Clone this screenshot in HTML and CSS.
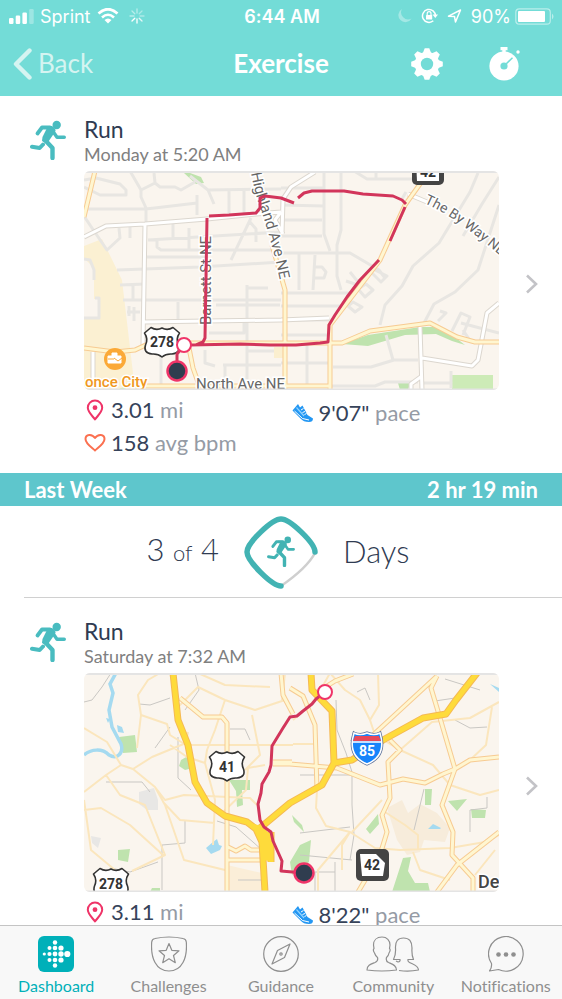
FILE: index.html
```html
<!DOCTYPE html>
<html lang="en">
<head>
    <meta charset="UTF-8">
    <meta name="viewport" content="width=device-width, initial-scale=1.0">
    <title>Exercise</title>
    <link rel="stylesheet" href="styles.css">
</head>
<body>
    <!-- shared shapes -->
    <svg class="defs" width="0" height="0" aria-hidden="true">
        <symbol id="runner" viewBox="0 0 36 40">
            <circle cx="26.7" cy="5" r="4.2" fill="currentColor"/>
            <g fill="none" stroke="currentColor" stroke-linecap="round" stroke-linejoin="round">
                <path d="M7.5 13.5L12 7.5H20" stroke-width="3.8"/>
                <path d="M22 10L27 17.2H34.3" stroke-width="3.4"/>
                <path d="M2 26.7L9.7 28L13 24.5" stroke-width="4"/>
                <path d="M15 20L22.5 28V38" stroke-width="4.4"/>
            </g>
            <path d="M14 6H22Q27 9 25 12L19.5 20L17 24L12 21L12.500 17L16.500 9Z" fill="currentColor"/>
        </symbol>
        <symbol id="us-shield" viewBox="-20 -17 40 34">
            <path d="M-11-14.5Q-5.500-11 0-14Q5.500-11 11-14.500L17.500-9Q13.500-3 16.500 3Q19 11 10 12Q4 11.500 0 15Q-4 11.500-10 12Q-19 11-16.500 3Q-13.500-3-17.500-9Z" fill="#fff" stroke="#333" stroke-width="1.6" stroke-linejoin="round"/>
        </symbol>
        <symbol id="pin" viewBox="0 0 18 22">
            <path d="M9 20.500C6 16.500 1.800 12.500 1.800 8.700A7.200 7.200 0 0 1 16.200 8.700C16.200 12.500 12 16.500 9 20.500Z" fill="none" stroke="#ef3468" stroke-width="2" stroke-linejoin="round"/>
            <circle cx="9" cy="8.700" r="2.400" fill="#ef3468"/>
        </symbol>
        <symbol id="heart" viewBox="0 0 22 20">
            <path d="M11 17.500C7 14 1.500 10.500 1.500 6C1.500 1 8 .5 11 5C14 .5 20.500 1 20.500 6C20.500 10.500 15 14 11 17.500Z" fill="none" stroke="#fb7050" stroke-width="2" stroke-linejoin="round"/>
        </symbol>
        <symbol id="shoe" viewBox="0 0 22 20">
            <path d="M.5 7.500L6 1L8 4.500L10.500 2.500L15.500 12L21 15.500Q21 19 17 19Q11.500 19 8.500 15.500Z" fill="#2397f3"/>
            <path d="M2.500 8L10.500 15.500L17 17" fill="none" stroke="#fff" stroke-width="1"/>
            <path d="M4.500 4.500L12 13" fill="none" stroke="#8fd3ff" stroke-width="1.200"/>
            <path d="M9 7L11.500 5.500M10.500 9.500L13 8.500M12.500 11.500L14.500 10.500" stroke="#fff" stroke-width="1"/>
        </symbol>
        <symbol id="chevron" viewBox="0 0 14 20">
            <path d="M2 1.500L11 10L2 18.500" fill="none" stroke="#c3c3c7" stroke-width="2.600"/>
        </symbol>
        <symbol id="gear-tooth" viewBox="-17 -17 34 34">
            <path d="M-4.500-10L-2.300-15.800H2.300L4.500-10V10L2.300 15.800H-2.300L-4.500 10Z"/>
        </symbol>
    </svg>

    <header class="header">
        <div class="status">
            <div class="status-side">
                <svg width="25" height="15" viewBox="0 0 25 15" fill="#fff">
                    <rect x="0" y="9" width="4.500" height="6" rx="1.200"/>
                    <rect x="6.700" y="6.500" width="4.500" height="8.500" rx="1.200"/>
                    <rect x="13.400" y="3.500" width="4.500" height="11.500" rx="1.200"/>
                    <rect x="20.200" y="0" width="4.500" height="15" rx="1.200" opacity=".3"/>
                </svg>
                <span class="carrier">Sprint</span>
                <svg width="22" height="16" viewBox="0 0 22 16" fill="none" stroke="#fff">
                    <path d="M1.500 5.500Q11-3 20.500 5.500" stroke-width="2.800"/>
                    <path d="M5 9.500Q11 4 17 9.500" stroke-width="2.600"/>
                    <path d="M7.500 12L11 15.500L14.500 12Q11 9 7.500 12Z" fill="#fff" stroke="none"/>
                </svg>
                <svg class="spinner" width="16" height="16" viewBox="0 0 16 16" stroke="#fff" stroke-width="1.300" stroke-linecap="round">
                    <path d="M8 1V5" opacity=".5"/><path d="M13 3L10.200 5.800" opacity=".4"/>
                    <path d="M15 8H11" opacity=".4"/><path d="M13 13L10.200 10.200" opacity=".8"/>
                    <path d="M8 15V11"/><path d="M3 13L5.800 10.200"/>
                    <path d="M1 8H5" opacity=".5"/><path d="M3 3L5.800 5.800" opacity=".5"/>
                </svg>
            </div>
            <span class="clock">6:44 AM</span>
            <div class="status-side status-right">
                <svg width="14" height="14" viewBox="0 0 14 14"><path d="M4 0A7 7 0 1 0 13.500 9.500A7 7 0 0 1 4 0Z" fill="#fff" opacity=".35"/></svg>
                <svg width="17" height="16" viewBox="0 0 17 16">
                    <path d="M14.500 8A6.500 6.500 0 1 0 12.300 12.800" fill="none" stroke="#fff" stroke-width="1.500"/>
                    <path d="M11.500 6.500H17L14.300 10Z" fill="#fff"/>
                    <rect x="5" y="7" width="6.200" height="4.500" rx=".6" fill="#fff"/>
                    <path d="M6.200 7V5.500A1.900 1.900 0 0 1 10 5.500V7" fill="none" stroke="#fff" stroke-width="1.200"/>
                </svg>
                <svg width="15" height="14" viewBox="0 0 15 14"><path d="M1.500 7.200L13.500 1L8.500 13L7.500 7.500Z" fill="none" stroke="#fff" stroke-width="1.500" stroke-linejoin="round"/></svg>
                <span>90%</span>
                <svg width="40" height="17" viewBox="0 0 40 17">
                    <rect x=".8" y=".8" width="34.500" height="15.400" rx="3.500" fill="none" stroke="#fff" stroke-width="1.200" opacity=".5"/>
                    <rect x="3" y="3" width="27" height="11" rx="1" fill="#fff"/>
                    <path d="M37 5.500Q40 8.500 37 11.500Z" fill="#fff" opacity=".5"/>
                </svg>
            </div>
        </div>
        <div class="navbar">
            <button class="back" type="button">
                <svg width="20" height="34" viewBox="0 0 20 34"><path d="M17.500 3.500L4 17L17.500 30.500" fill="none" stroke="#d5f4f1" stroke-width="4.400" stroke-linecap="round" stroke-linejoin="round"/></svg>
                <span>Back</span>
            </button>
            <h1>Exercise</h1>
            <div class="actions">
                <button type="button" aria-label="Settings">
                    <svg width="34" height="34" viewBox="-17 -17 34 34">
                        <g fill="#fff">
                            <use href="#gear-tooth" x="-17" y="-17" width="34" height="34"/>
                            <use href="#gear-tooth" x="-17" y="-17" width="34" height="34" transform="rotate(45)"/>
                            <use href="#gear-tooth" x="-17" y="-17" width="34" height="34" transform="rotate(90)"/>
                            <use href="#gear-tooth" x="-17" y="-17" width="34" height="34" transform="rotate(135)"/>
                            <circle r="12.300"/>
                        </g>
                        <circle r="6.200" fill="#73dcd7"/>
                    </svg>
                </button>
                <button type="button" aria-label="Stopwatch">
                    <svg width="34" height="36" viewBox="0 0 34 36">
                        <circle cx="16" cy="20" r="14.600" fill="#fff"/>
                        <path d="M12.500 1H19.500V4.200H17.700V8H14.300V4.200H12.500Z" fill="#fff"/>
                        <circle cx="30" cy="6" r="1.700" fill="#fff"/>
                        <circle cx="16" cy="20" r="3.600" fill="#73dcd7"/>
                        <path d="M16 20L24.500 11.700" stroke="#73dcd7" stroke-width="1.500"/>
                    </svg>
                </button>
            </div>
        </div>
    </header>

    <main class="feed">
        <a class="workout" href="#monday">
            <svg class="workout-icon" width="36" height="40"><use href="#runner"/></svg>
            <div class="workout-body">
                <h2>Run</h2>
                <p class="when">Monday at 5:20 AM</p>
                <svg class="map" viewBox="84 171 415 219">
                    <rect x="84" y="171" width="415" height="219" fill="#faf5ee"/>
                    <path d="M84 246L102 239L122 280L135 390H84V318H100V299H94V268L84 258Z" fill="#fbf0d2"/>
                    <path d="M184 173H190L201 177L204 183L196 184ZM342 344L368 335L420 327H435L456 338L465 345L452 341L436 334L405 335L368 346ZM398 383H410L408 390H400Z" fill="#bfe3ae"/>
                    <path d="M452 375H493V390H452ZM118 390Q123 385 128 390Z" fill="#cdebb7"/>
                    <path d="M274 347H284V358H274Z" fill="#fbefcf"/>
                    <g class="street">
                        <path d="M84 180L96 178L120 184L126 190V195H100L84 187M130 171L141 190V197L146 208V224M141 190L155 183L154 173M155 183L160 187H175L181 190L195 182M190 176L208 190L214 204M87 209H146L197 203M197 195V215M208 190L281 189M229 190V214M244 189V213M84 216L92 228L107 250L120 238L119 228M130 226V238M148 240L281 232M157 240V247L161 250H281M173 223V238M189 228V250M251 218L231 260M250 222L256 229V242"/>
                        <path d="M117 270L200 267L281 262M147 257H205M120 285L145 284M123 300H281M133 300V286M178 302V323M247 285V388M216 305H280M209 333H244V322M248 288H268M84 259L90 260L94 270V280M95 298H99V318H84M127 312H140M129 306V316M134 307V321M161 345V388M205 350V363L215 366M223 365H281M225 366V388M248 351H274"/>
                        <path d="M281 188H324V173M341 173V230L337 245V276L341 290M324 173V234L330 251M281 220H322M322 236H281M281 205L324 206M281 253H350L379 270L385 278M299 254V290M315 255L313 290M313 267H322L326 272L324 278H315M281 293H350M281 306H340M281 320H333M281 335H327M354 171L367 179H376M376 173V179M367 179H415M406 192L402 199M478 173L470 192L439 243L413 266L402 286L385 305L380 325M499 177L482 204L463 236M499 205L478 270L455 292L434 304L423 325M375 270L387 276L381 282L371 272M350 272L358 282M346 281L358 285M366 284L373 290L365 297L358 289ZM353 302L362 307L355 312L348 306Z"/>
                        <path d="M333 367H371L394 360H418M332 386H375L385 382H418M423 383H452M451 371V388M386 335L393 360M452 331L461 313L470 317L463 335M461 323L499 333M438 321L446 313L440 311M471 342L463 330M281 363H330M307 344V385"/>
                    </g>
                    <g class="lane-edge">
                        <path d="M84 237L106 226L145 224L207 219L256 214L281 212M145 224L143 345M143 322L281 320L329 318M93 352V385M315 172L291 187L283 199L282 234M281 212L275 220L283 234M408 194L427 202M420 327L422 390M422 358L472 366L478 360L487 313L499 303M422 376L411 384V390"/>
                    </g>
                    <g class="lane">
                        <path d="M84 237L106 226L145 224L207 219L256 214L281 212M145 224L143 345M143 322L281 320L329 318M93 352V385M315 172L291 187L283 199L282 234M281 212L275 220L283 234M408 194L427 202M420 327L422 390M422 358L472 366L478 360L487 313L499 303M422 376L411 384V390"/>
                    </g>
                    <g class="avenue-edge">
                        <path d="M95 171L84 217M84 348L115 352L135 350L150 343H342L370 331L430 323L457 337L475 342H499M425 177L405 205L380 260L330 325V390M135 386H330M189 348L193 368L199 385M272 245L285 290V390"/>
                    </g>
                    <g class="avenue">
                        <path d="M95 171L84 217M84 348L115 352L135 350L150 343H342L370 331L430 323L457 337L475 342H499M425 177L405 205L380 260L330 325V390M135 386H330M189 348L193 368L199 385M272 245L285 290V390"/>
                    </g>
                    <path id="highland" d="M251 173C254 188 256 196 260 207S273 245 282 290" fill="none"/>
                    <path id="byway" d="M424 203C450 214 475 234 530 280" fill="none"/>
                    <g class="place">
                        <text><textPath href="#highland">Highland Ave NE</textPath></text>
                        <text class="place-small"><textPath href="#byway">The By Way NE</textPath></text>
                        <text transform="translate(211 325) rotate(-90)">Barnett St NE</text>
                        <text x="196" y="389">North Ave NE</text>
                    </g>
                    <circle cx="115" cy="359" r="11" fill="#fba937"/>
                    <path d="M108 356H121V363H108ZM112 356V353H117V356" fill="#fff" stroke="#fff" stroke-width="1"/>
                    <path d="M108 359H114M114 358L118 361L122 358" fill="none" stroke="#fba937" stroke-width="1"/>
                    <text class="city" x="85" y="387">once City</text>
                    <rect x="412" y="155" width="32" height="30" rx="5" fill="#444"/>
                    <path d="M416 160H439V181H417Z" fill="#fff"/>
                    <text class="shield-text" x="428" y="177">42</text>
                    <use href="#us-shield" x="142" y="325" width="40" height="34"/>
                    <text class="shield-text" x="162" y="347">278</text>
                    <path class="route" d="M177 371V354L184 345M184 345H196L203 342L205 338L207 218M209 216L229 215L256 213L260 208V198L265 196L281 198L294 203M298 198L304 193L312 191H344L363 194L393 196L402 200L406 204M405 207L390 241M379 260L360 280L347 297L335 315L329 325L328 342L320 343L296 345L270 345L240 344L190 345"/>
                    <circle cx="184" cy="345" r="7" fill="#fff" stroke="#ef3468" stroke-width="2"/>
                    <circle cx="177" cy="371" r="9.500" fill="#303d4f" stroke="#ef3468" stroke-width="2.500"/>
                    <path d="M84 172H499M84 389.500H499" stroke="#e4e4e4" stroke-width="2"/>
                </svg>
                <div class="stats">
                    <ul>
                        <li><svg width="22" height="22"><use href="#pin"/></svg><span><b>3.01</b> mi</span></li>
                        <li><svg width="22" height="20"><use href="#heart"/></svg><span><b>158</b> avg bpm</span></li>
                    </ul>
                    <ul class="pace">
                        <li><svg width="22" height="20"><use href="#shoe"/></svg><span><b>9'07"</b> pace</span></li>
                    </ul>
                </div>
            </div>
            <svg class="chevron" width="14" height="20"><use href="#chevron"/></svg>
        </a>

        <div class="week">
            <h2>Last Week</h2>
            <span>2 hr 19 min</span>
        </div>

        <div class="goal">
            <p class="goal-count">3 <small>of</small> 4</p>
            <svg width="74" height="74" viewBox="-37 -37 74 74">
                <path d="M34 1Q26 16 0 34" fill="none" stroke="#cfcfcf" stroke-width="2.600"/>
                <path d="M34 0C34-9 9-33 0-33S-34-9-34 0S-9 34 0 34" fill="none" stroke="#42b3b3" stroke-width="5.500" stroke-linecap="round"/>
                <use class="goal-runner" href="#runner" x="-14" y="-16" width="28" height="31"/>
            </svg>
            <p>Days</p>
        </div>

        <a class="workout" href="#saturday">
            <svg class="workout-icon" width="36" height="40"><use href="#runner"/></svg>
            <div class="workout-body">
                <h2>Run</h2>
                <p class="when">Saturday at 7:32 AM</p>
                <svg class="map" viewBox="84 673 415 219">
                    <rect x="84" y="673" width="415" height="219" fill="#faf5ee"/>
                    <path d="M387 808L402 800L408 813L420 804L437 813L450 828L445 842L424 840L420 852L407 855L397 840Z" fill="#f7ecdb"/>
                    <path d="M227 865L262 873V892H227Z" fill="#fbeed8"/>
                    <path d="M139 792L154 788L158 800V810H147L139 804ZM91 836L101 838L98 848L92 843Z" fill="#e8e7e5"/>
                    <path d="M119 737L135 735L137 752L123 753ZM181 760L188 756L193 768L185 770L179 766ZM229 780H250V790H242L243 805L237 807L236 791ZM118 850L130 849L128 862L118 860ZM152 888H160V892H150ZM292 815L302 825L304 832L294 822ZM290 862L300 845L311 840L309 862L292 875ZM425 789H432L431 805H425ZM448 801L467 799L457 811ZM471 809L486 810L485 818H472ZM378 814L379 824L370 834L366 829ZM403 858L411 857L408 871L415 883H428L430 892H392Z" fill="#bfe3ae"/>
                    <path d="M84 755C91 749 102 748 109 755C117 760 124 753 121 744L112 727L109 710L113 693L110 684L116 673" fill="none" stroke="#a5daf0" stroke-width="3.500"/>
                    <path d="M117 725L122 727L124 733L118 732ZM106 718L110 719L108 723ZM206 848L213 842L217 839L219 845L222 846L220 850L211 854ZM428 829L433 824L441 828L440 829ZM490 684L499 688V692Z" fill="#a5daf0"/>
                    <g class="county">
                        <path d="M111 673L102 687L92 700L84 702M195 673L199 690L185 710M139 704L150 705L170 698M155 748L170 727M178 737V778L191 790M106 782H142L150 792M185 820V843L162 845V890M230 729H245L250 740M217 821L236 827L262 850M238 880H262M110 868L130 872L158 862M336 700L337 730L346 753L352 772V805L354 835L350 860M357 692L365 688L370 700M300 775H350M300 833L350 827M435 701L455 698M455 720L470 728L487 727M424 789L414 830M470 832V810L487 808V797M300 855L352 860M315 872V892M335 862V892M315 872H335M350 740L380 755M445 679L480 690"/>
                    </g>
                    <g class="byroad">
                        <path d="M84 728L107 742L121 765L133 769L152 757L186 743L188 732M160 673L148 680L138 695L141 715L137 748M141 715L167 724L170 735L186 745H293M121 765L106 775L84 792M133 769L155 787L165 805L184 860L225 870M106 775L120 795L145 805L165 855L132 871M84 810L101 808L130 825L163 855M84 800L91 850L115 870M155 787L165 800L184 795L250 798L257 805M163 802L180 820L215 823M170 745L187 757L205 763L215 800L213 845M175 710L198 687L225 700L255 710L285 700M225 700L215 730L207 750L205 763M198 673L225 685L270 687M285 673L282 700M252 715L255 730L260 755L245 770M330 673L315 700L293 720M293 744H317M265 765L248 768L246 790L220 815"/>
                        <path d="M378 673L379 705L370 720L360 700L345 690L330 673M370 720L375 735L400 750M400 750L433 765L450 785L480 795L499 790M400 750L432 722L470 718L499 702M492 707L486 745L470 760M317 790L316 808L326 826L350 832L375 848L400 850L450 848L485 842L499 835M350 832L318 870V892M350 832L342 845V870M385 812L405 825L418 835V850M352 832L382 800M495 850L475 875M413 852L420 870L450 880"/>
                    </g>
                    <g class="avenue-edge">
                        <path d="M180 698L203 717H222L227 723V892M281 673L283 695L293 714M290 688L303 696L315 725L317 790M327 686L335 681L353 674M437 676L373 735M437 676L431 688L440 718L455 769L470 760L499 757M455 769L443 774L425 783L403 779L380 785L337 768L290 764H273M390 740L400 750L388 762L390 798L382 815L387 832L380 855L358 892M455 769L442 805L453 832L452 855L473 878V892M499 832L457 865L437 892M228 847L236 851L245 846L251 850H262M228 860H262M273 762H292"/>
                    </g>
                    <g class="avenue">
                        <path d="M180 698L203 717H222L227 723V892M281 673L283 695L293 714M290 688L303 696L315 725L317 790M327 686L335 681L353 674M437 676L373 735M437 676L431 688L440 718L455 769L470 760L499 757M455 769L443 774L425 783L403 779L380 785L337 768L290 764H273M390 740L400 750L388 762L390 798L382 815L387 832L380 855L358 892M455 769L442 805L453 832L452 855L473 878V892M499 832L457 865L437 892M228 847L236 851L245 846L251 850H262M228 860H262M273 762H292"/>
                    </g>
                    <g class="freeway-edge">
                        <path d="M173 673L178 720L188 745L195 782L207 803L225 816L247 822L256 829L262 842L265 892M311 673L312 690L332 711L334 763L322 785L290 803L260 828M334 763L352 760L383 740L423 718L446 714L456 700L477 673M271 832V862"/>
                    </g>
                    <g class="freeway">
                        <path d="M173 673L178 720L188 745L195 782L207 803L225 816L247 822L256 829L262 842L265 892M311 673L312 690L332 711L334 763L322 785L290 803L260 828M334 763L352 760L383 740L423 718L446 714L456 700L477 673M271 832V862"/>
                    </g>
                    <path d="M250 823L262 826L270 834V861L262 860L259 837Z" fill="#fedb3b"/>
                    <use href="#us-shield" x="207" y="749" width="40" height="34"/>
                    <text class="shield-text" x="227" y="772">41</text>
                    <use href="#us-shield" x="91" y="866" width="40" height="34"/>
                    <text class="shield-text" x="111" y="889">278</text>
                    <path d="M354 733Q360 736 367 733Q374 736 380 733Q387 756 367 764Q347 756 354 733Z" fill="#1784fb" stroke="#5b719b" stroke-width="3"/>
                    <path d="M354 733Q360 736 367 733Q374 736 380 733Q387 756 367 764Q347 756 354 733Z" fill="#1784fb" stroke="#fff" stroke-width="1.500"/>
                    <path d="M355 736H379L381 741H353Z" fill="#e8485a"/>
                    <path d="M353 742H381" stroke="#fff" stroke-width="1.500"/>
                    <text class="shield-text interstate" x="367" y="756">85</text>
                    <rect x="356" y="849" width="33" height="32" rx="5" fill="#444"/>
                    <path d="M360 854H376L385 863L383 876H362Z" fill="#fff"/>
                    <text class="shield-text" x="372" y="870">42</text>
                    <text class="town" x="478" y="888">De</text>
                    <path class="route" d="M325 692L316 699L312 704L303 711L297 716L290 717L283 728L272 746L271 765L269 772L262 784L261 793L258 804L260 820L264 827L271 832L273 841L282 861L281 871L304 873"/>
                    <circle cx="325" cy="692" r="7" fill="#fff" stroke="#ef3468" stroke-width="2"/>
                    <circle cx="304" cy="873" r="9.500" fill="#303d4f" stroke="#ef3468" stroke-width="2.500"/>
                    <path d="M84 674H499M84 891.500H499" stroke="#e4e4e4" stroke-width="2"/>
                </svg>
                <div class="stats">
                    <ul>
                        <li><svg width="22" height="22"><use href="#pin"/></svg><span><b>3.11</b> mi</span></li>
                    </ul>
                    <ul class="pace">
                        <li><svg width="22" height="20"><use href="#shoe"/></svg><span><b>8'22"</b> pace</span></li>
                    </ul>
                </div>
            </div>
            <svg class="chevron" width="14" height="20"><use href="#chevron"/></svg>
        </a>
    </main>

    <nav class="tabs">
        <a class="active" href="#dashboard">
            <svg width="36" height="36" viewBox="0 0 36 36">
                <rect width="36" height="36" rx="6" fill="#00b0b9"/>
                <g fill="#fff">
                    <circle cx="6.300" cy="18" r="1.600"/>
                    <circle cx="11.500" cy="12" r="2"/><circle cx="11.500" cy="18" r="2.100"/><circle cx="11.500" cy="24" r="2"/>
                    <circle cx="17" cy="6.500" r="2.200"/><circle cx="17" cy="12" r="2.300"/><circle cx="17" cy="18" r="2.400"/><circle cx="17" cy="24" r="2.300"/><circle cx="17" cy="29.500" r="2.200"/>
                    <circle cx="23" cy="12" r="2.600"/><circle cx="23" cy="18" r="2.700"/><circle cx="23" cy="24" r="2.600"/>
                    <circle cx="29.300" cy="18" r="3.100"/>
                </g>
            </svg>
            <span>Dashboard</span>
        </a>
        <a href="#challenges">
            <svg class="line-icon" width="36" height="36" viewBox="0 0 36 36">
                <path d="M4 2.500Q18-.5 32 2.500Q35 3 35.300 6C36.500 22 31 35 18 35S-.500 22 .700 6Q1 3 4 2.500Z"/>
                <path d="M18 7.500L20.800 14.300L28 14.800L22.500 19.500L24.300 26.700L18 22.800L11.700 26.700L13.500 19.500L8 14.800L15.200 14.300Z"/>
            </svg>
            <span>Challenges</span>
        </a>
        <a href="#guidance">
            <svg class="line-icon" width="36" height="36" viewBox="0 0 36 36">
                <circle cx="18" cy="18" r="17.300"/>
                <path d="M27 8L21.500 21.500L9 28L14.500 14.500Z"/>
                <circle cx="18" cy="18" r="1.200"/>
            </svg>
            <span>Guidance</span>
        </a>
        <a href="#community">
            <svg class="line-icon" width="54" height="36" viewBox="0 0 54 36">
                <path d="M16 1C10.500 1 7.500 4.500 7.500 9L8 12.500Q6.500 14 8.500 17Q9.500 20 11.500 21.500Q12.500 25 9 26.500C5 28 1 29 1 34Q16 36 30.500 34C30.500 29 26 28 22.500 26.500Q19.500 25 20.500 21.500Q22.500 20 23 17Q25 14 23.500 12.500L24 9C24 4.500 21 1 16 1Z"/>
                <path d="M33 34.500Q43 36 52.500 34C52 29 47 28.500 43.500 26.500Q41.500 25.500 42 23.500H47.500Q45.500 19 46 12Q46 2 37.500 2T29.500 12Q30 19 27.500 23.500H34Q34.500 25.500 32 26L30 25"/>
            </svg>
            <span>Community</span>
        </a>
        <a href="#notifications">
            <svg class="line-icon" width="36" height="36" viewBox="0 0 36 36">
                <path d="M3.500 27.500A17.300 17.300 0 1 1 10.500 33.500L1.500 35Q4 32 3.500 27.500Z"/>
                <g fill="#8f8f8f" stroke="none"><circle cx="10.500" cy="18.500" r="2.300"/><circle cx="18" cy="18.500" r="2.300"/><circle cx="25.500" cy="18.500" r="2.300"/></g>
            </svg>
            <span>Notifications</span>
        </a>
    </nav>
</body>
</html>
```

FILE: styles.css
```css
* {
    box-sizing: border-box;
}
body {
    display: flex;
    flex-direction: column;
    height: 100vh;
    margin: 0;
    background: #fff;
    color: #2f3b52;
    font-family: Lato, "Open Sans", sans-serif;
    font-variant-ligatures: none;
}
h1, h2, p, ul {
    margin: 0;
    padding: 0;
    font-weight: 400;
}
ul {
    list-style: none;
}
a {
    color: inherit;
    text-decoration: none;
}
button {
    padding: 0;
    border: none;
    background: none;
    color: inherit;
    font: inherit;
    cursor: pointer;
}
svg {
    display: block;
    flex: none;
}
.defs {
    position: absolute;
}

/* header */
.header {
    flex: none;
    background: #73dcd7;
    color: #fff;
}
.status {
    display: grid;
    grid-template-columns: 1fr auto 1fr;
    align-items: center;
    height: 32px;
    padding: 0 7px 0 9px;
    font-family: Inter, sans-serif;
    font-size: 18px;
}
.status-side {
    display: flex;
    align-items: center;
    gap: 6px;
}
.status-right {
    justify-content: flex-end;
    gap: 9px;
}
.status-right span {
    margin-right: -5px;
}
.spinner {
    margin-left: 4px;
}
.clock {
    font-weight: 600;
}
.navbar {
    display: grid;
    grid-template-columns: 1fr auto 1fr;
    align-items: center;
    height: 64px;
    padding: 0 40px 0 12px;
}
.back {
    display: flex;
    align-items: center;
    gap: 6px;
    color: #d5f4f1;
    font-size: 26px;
    line-height: 28px;
}
.navbar h1 {
    padding-left: 28px;
    font-size: 26px;
    font-weight: 700;
    line-height: 28px;
}
.back span, .navbar h1 {
    padding-bottom: 2px;
}
.actions {
    display: flex;
    justify-content: flex-end;
    gap: 44px;
}

/* feed */
.feed {
    flex: 1;
    min-height: 0;
    overflow-y: auto;
    scrollbar-width: none;
}
.workout {
    display: flex;
    padding: 20px 0 14px 30px;
}
.workout-icon {
    margin: 4px 18px 0 0;
    color: #49bcc0;
}
.workout-body {
    flex: 1;
    min-width: 0;
}
.workout h2 {
    font-size: 23px;
    line-height: 27px;
}
.when {
    color: #808080;
    font-size: 18px;
    line-height: 22px;
}
.map {
    width: 100%;
    height: auto;
    margin-top: 6px;
    border-radius: 6px;
}
.chevron {
    margin: 158px 23px 0 26px;
}
.stats {
    display: grid;
    grid-template-columns: 1fr 1fr;
    padding-top: 3px;
}
.stats li {
    display: flex;
    align-items: center;
    gap: 5px;
    height: 33px;
    color: #959ba5;
    font-size: 22px;
}
.stats b {
    color: #36435a;
    font-weight: 400;
}
.pace {
    padding-top: 3px;
}
.week {
    display: flex;
    align-items: center;
    justify-content: space-between;
    height: 33px;
    padding: 0 24px;
    background: #5ec6cc;
    color: #fff;
    font-size: 22px;
    font-weight: 700;
}
.week h2 {
    font-size: inherit;
    font-weight: inherit;
}
.goal {
    display: grid;
    grid-template-columns: 1fr auto 1fr;
    align-items: center;
    gap: 25px;
    height: 92px;
    margin-left: 24px;
    padding-right: 24px;
    border-bottom: 1px solid #d0d0d0;
    font-size: 31px;
    line-height: 36px;
}
.goal p {
    padding-bottom: 2px;
    font-weight: 300;
}
.goal-count {
    text-align: right;
}
.goal small {
    font-size: 22px;
}
.goal-runner {
    color: #42b3b3;
}

/* maps */
.street, .lane, .lane-edge, .avenue, .avenue-edge, .freeway, .freeway-edge, .byroad, .county, .route {
    fill: none;
    stroke-linejoin: round;
}
.street {
    stroke: #e8e6e2;
    stroke-width: 3;
}
.county {
    stroke: #c9c7c3;
    stroke-width: 1;
}
.byroad {
    stroke: #fbe6bd;
    stroke-width: 2;
}
.lane-edge {
    stroke: #dcd7cf;
    stroke-width: 5;
}
.lane {
    stroke: #fff;
    stroke-width: 3;
}
.avenue-edge {
    stroke: #f7cb92;
    stroke-width: 5;
}
.avenue {
    stroke: #fff6d0;
    stroke-width: 3;
}
.freeway-edge {
    stroke: #f5b954;
    stroke-width: 7;
}
.freeway {
    stroke: #fedb3b;
    stroke-width: 5;
}
.route {
    stroke: #d2355b;
    stroke-width: 3;
}
.place, .city, .town {
    font-family: Roboto, sans-serif;
    font-size: 15px;
    fill: #666;
    stroke: #fff;
    stroke-width: 3;
    paint-order: stroke;
}
.place-small {
    font-size: 14px;
}
.city {
    font-weight: 500;
    fill: #f0981d;
}
.town {
    font-size: 18px;
    font-weight: 500;
    fill: #444;
}
.shield-text {
    font-family: Roboto, sans-serif;
    font-size: 14px;
    font-weight: 700;
    text-anchor: middle;
    fill: #333;
}
.interstate {
    fill: #fff;
}

/* tab bar */
.tabs {
    display: grid;
    grid-template-columns: repeat(5, 1fr);
    flex: none;
    height: 74px;
    padding-top: 10px;
    border-top: 1px solid #c4c4c4;
    background: #f8f8f8;
    color: #8f8f8f;
    font-size: 16px;
}
.tabs a {
    display: flex;
    flex-direction: column;
    align-items: center;
    gap: 4px;
}
.tabs .active {
    color: #00b0b9;
}
.line-icon {
    fill: none;
    stroke: #8f8f8f;
    stroke-width: 1.2;
    stroke-linejoin: round;
}
```
